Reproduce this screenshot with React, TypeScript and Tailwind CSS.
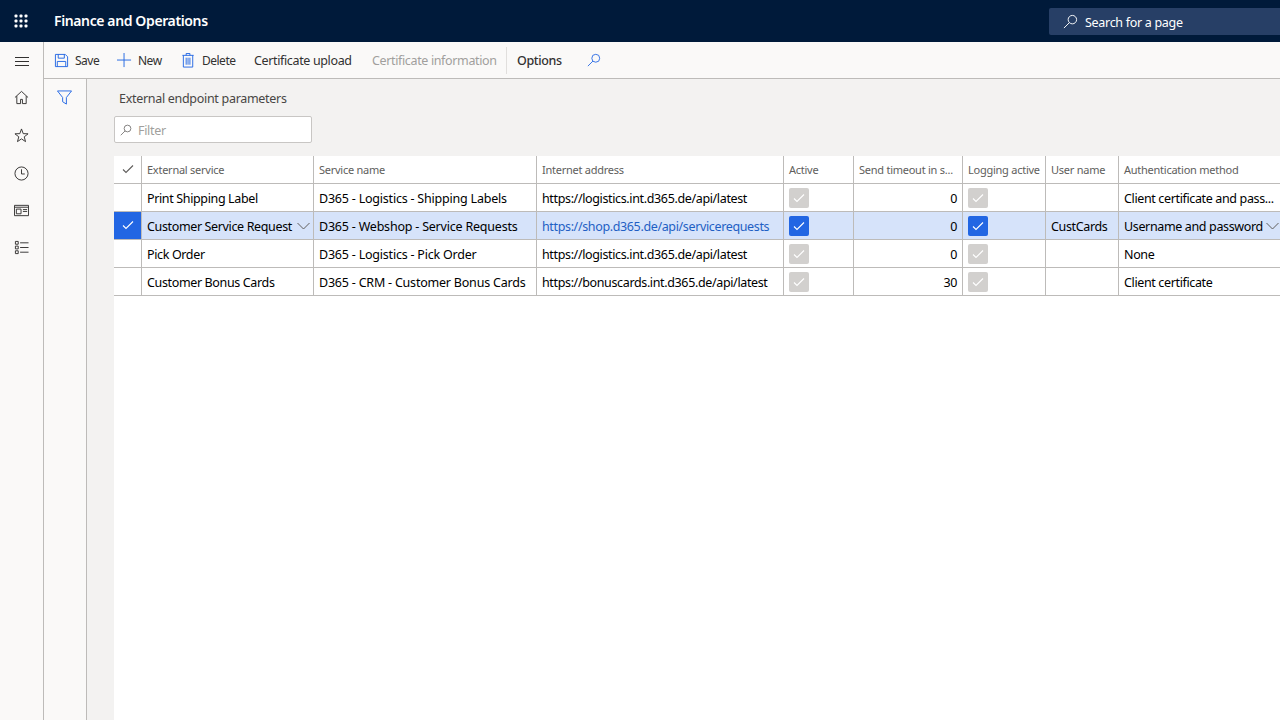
import type { ReactNode } from 'react'

const font = "font-['Noto_Sans','Open_Sans',sans-serif]"

// Thin fluent style icons
function Icon({ size = 16, className, children }: { size?: number; className?: string; children: ReactNode }) {
  return (
    <svg width={size} height={size} viewBox="0 0 16 16" fill="none" stroke="currentColor" strokeWidth="1" className={className}>
      {children}
    </svg>
  )
}

const Waffle = () => (
  <svg width="14" height="14" viewBox="0 0 14 14" fill="white">
    {[0, 5, 10].map((y) => [0, 5, 10].map((x) => <rect key={`${x}-${y}`} x={x + 0.5} y={y + 0.5} width="3" height="3" rx="1" />))}
  </svg>
)

const SearchGlass = ({ className, size = 16 }: { className?: string; size?: number }) => (
  <Icon size={size} className={className}>
    <circle cx="10" cy="6" r="4.5" />
    <path d="M6.8 9.2 1 15" />
  </Icon>
)

const Check = ({ className }: { className?: string }) => (
  <svg width="12" height="10" viewBox="0 0 12 10" fill="none" stroke="currentColor" strokeWidth="1.1" className={className}>
    <path d="M1 5.5 4 8.5 11 1.5" />
  </svg>
)

const Chevron = () => (
  <svg width="13" height="8" viewBox="0 0 13 8" fill="none" stroke="#605e5c" strokeWidth="1" className="shrink-0">
    <path d="M.5 1 6.5 7 12.5 1" />
  </svg>
)

function ToolButton({ icon, label, className }: { icon?: ReactNode; label: string; className?: string }) {
  return (
    <div className={`flex items-center gap-[6px] ${className ?? ''}`}>
      {icon}
      <span className="pt-[2px] text-[12px] tracking-[-0.5px]">{label}</span>
    </div>
  )
}

function Toolbar() {
  return (
    <div className="h-[37px] shrink-0 flex items-center pl-[10px] bg-[#faf9f8] border-b border-[#bdbbb9] text-[12.5px] tracking-[-0.36px] text-[#323130]">
      <ToolButton
        className="w-[63px]"
        label="Save"
        icon={
          <Icon size={15} className="text-[#2266e3]">
            <path d="M1.5 1.5h10.5l2.5 2.5v10.5h-13z" />
            <path d="M4.5 1.5v4h6.5v-4M3.5 14.5v-5.5h9v5.5" />
          </Icon>
        }
      />
      <ToolButton
        className="w-[64px]"
        label="New"
        icon={
          <Icon size={15} className="text-[#2266e3]">
            <path d="M7.5 0v15M0 7.5h15" />
          </Icon>
        }
      />
      <ToolButton
        className="w-[73px]"
        label="Delete"
        icon={
          <Icon size={15} className="text-[#2266e3]">
            <path d="M1.5 2.5h12M5.5 2.5v-2h4v2M2.5 2.5v12.5h10v-12.5M5.5 5v7.5M7.5 5v7.5M9.5 5v7.5" />
          </Icon>
        }
      />
      <span className="w-[118px] pt-[2px]">Certificate upload</span>
      <span className="w-[134px] pt-[2px] text-[#a19f9d]">Certificate information</span>
      <div className="w-px h-[27px] bg-[#e1dfdd] mr-[10px]" />
      <span className="w-[70px] pt-[2px] font-medium">Options</span>
      <SearchGlass size={14} className="text-[#2266e3]" />
    </div>
  )
}

function NavRail() {
  return (
    <div className="w-[44px] shrink-0 bg-[#faf9f8] border-r border-[#bdbbb9] flex flex-col items-center text-[#323130]">
      <div className="h-[36px] pt-[3px] flex items-center">
        <svg width="14" height="10" viewBox="0 0 14 10" stroke="currentColor" strokeWidth="1">
          <path d="M0 .5h14M0 4.5h14M0 8.5h14" />
        </svg>
      </div>
      <div className="flex flex-col items-center">
        <div className="h-[38px] flex items-center">
          <Icon size={15}>
            <path d="M1 8 8 1.5 15 8M3 6.5v8h4v-4.5h2v4.5h4v-8" />
          </Icon>
        </div>
        <div className="h-[38px] flex items-center">
          <Icon size={15}>
            <path d="M8 1 9.8 6l5.2.2-4.1 3.2 1.4 5.1L8 11.6l-4.3 2.9 1.4-5.1L1 6.2 6.2 6z" />
          </Icon>
        </div>
        <div className="h-[38px] flex items-center">
          <Icon size={15}>
            <circle cx="8" cy="8" r="7" />
            <path d="M8 3.5V8.5h3.5" />
          </Icon>
        </div>
        <div className="h-[36px] flex items-center">
          <Icon size={15}>
            <path d="M.5 2.5h15v11H.5zM.5 4.5h15" />
            <path d="M2.5 6.5h5v5h-5zM9.5 7h4.5M9.5 9h4.5" />
          </Icon>
        </div>
        <div className="h-[38px] flex items-center">
          <Icon size={15}>
            <path d="M1.5 1.5h3v3h-3zM1.5 6.5h3v3h-3zM1.5 11.5h3v3h-3zM6.5 3h9M6.5 8h9M6.5 13h9" />
          </Icon>
        </div>
      </div>
    </div>
  )
}

const cols = 'grid grid-cols-[28px_172px_223px_247px_70px_109px_83px_73px_170px]'

const rows = [
  { ext: 'Print Shipping Label', svc: 'D365 - Logistics - Shipping Labels', url: 'https://logistics.int.d365.de/api/latest', timeout: 0, user: '', auth: 'Client certificate and pass...' },
  { ext: 'Customer Service Request', svc: 'D365 - Webshop - Service Requests', url: 'https://shop.d365.de/api/servicerequests', timeout: 0, user: 'CustCards', auth: 'Username and password', selected: true },
  { ext: 'Pick Order', svc: 'D365 - Logistics - Pick Order', url: 'https://logistics.int.d365.de/api/latest', timeout: 0, user: '', auth: 'None' },
  { ext: 'Customer Bonus Cards', svc: 'D365 - CRM - Customer Bonus Cards', url: 'https://bonuscards.int.d365.de/api/latest', timeout: 30, user: '', auth: 'Client certificate' },
]

const headers = ['External service', 'Service name', 'Internet address', 'Active', 'Send timeout in s...', 'Logging active', 'User name', 'Authentication method']

const cell = 'h-[27px] flex items-center px-[5px] border-r border-[#bdbbb9] whitespace-nowrap overflow-hidden'

function CheckBox({ on }: { on?: boolean }) {
  return (
    <div className={`w-5 h-5 rounded-[2px] flex items-center justify-center text-white ${on ? 'bg-[#2266e3]' : 'bg-[#d2d0ce]'}`}>
      <Check />
    </div>
  )
}

function EndpointGrid() {
  return (
    <div className="flex-1 bg-white overflow-hidden text-[12.5px] tracking-[-0.36px] text-black">
      <div className={`${cols} border-b border-[#bdbbb9] text-[11px] tracking-[-0.25px] text-[#605e5c]`}>
        <div className={`${cell} justify-center px-0 pb-[2px]`}>
          <Check className="text-[#605e5c]" />
        </div>
        {headers.map((h) => (
          <div key={h} className={`${cell} pt-[2px]`}>
            {h}
          </div>
        ))}
      </div>
      {rows.map((r) => (
        <div key={r.ext} className={`${cols} border-b border-[#bdbbb9] ${r.selected ? 'bg-[#d6e3fa]' : ''}`}>
          <div className={`${cell} justify-center px-0 pb-[2px] text-white ${r.selected ? 'bg-[#2266e3]' : ''}`}>{r.selected && <Check />}</div>
          <div className={`${cell} justify-between pr-[3px]`}>
            <span className="pt-[4px]">{r.ext}</span>
            {r.selected && <Chevron />}
          </div>
          <div className={`${cell} pt-[4px] tracking-[-0.21px]`}>{r.svc}</div>
          <div className={`${cell} pt-[4px] ${r.selected ? 'text-[#1f5fc4]' : ''}`}>{r.url}</div>
          <div className={cell}>
            <CheckBox on={r.selected} />
          </div>
          <div className={`${cell} pt-[4px] justify-end`}>{r.timeout}</div>
          <div className={cell}>
            <CheckBox on={r.selected} />
          </div>
          <div className={`${cell} pt-[4px]`}>{r.user}</div>
          <div className={`${cell} gap-[3px]`}>
            <span className="pt-[4px]">{r.auth}</span>
            {r.selected && <Chevron />}
          </div>
        </div>
      ))}
    </div>
  )
}

export default function App() {
  return (
    <div className={`w-[1280px] h-[720px] overflow-hidden flex flex-col bg-[#f3f2f1] ${font}`}>
      <header className="h-[42px] shrink-0 bg-[#001a3a] flex items-center text-white">
        <div className="w-[42px] flex justify-center">
          <Waffle />
        </div>
        <div className="ml-[12px] pb-[2px] text-[14px] font-semibold tracking-[-0.38px]">Finance and Operations</div>
        <div className="ml-auto w-[231px] h-[27px] bg-[#273f66] rounded-l-[2px] flex items-center pl-[14px] gap-[7px] text-[12.5px] tracking-[-0.3px]">
          <SearchGlass size={15} />
          <span className="pt-[4px]">Search for a page</span>
        </div>
      </header>
      <div className="flex-1 flex min-h-0">
        <NavRail />
        <div className="flex-1 flex flex-col min-w-0">
          <Toolbar />
          <div className="flex-1 flex min-h-0">
            <div className="w-[43px] shrink-0 bg-[#faf9f8] border-r border-[#bdbbb9] flex justify-center pt-[11px] pr-px">
              <Icon size={15} className="text-[#2266e3]">
                <path d="M.5 1h15L10 8v7l-4-2.5V8z" />
              </Icon>
            </div>
            <div className="flex-1 min-w-0 pl-[27px] flex flex-col">
              <div className="pl-[5px] pt-[11px] h-[37px] text-[12.5px] tracking-[-0.3px] text-[#484644]">External endpoint parameters</div>
              <div className="w-[198px] h-[27px] bg-white border border-[#c8c6c4] rounded-[2px] flex items-center pl-[5px] gap-[6px] text-[12.5px] tracking-[-0.3px] text-[#a19f9d]">
                <SearchGlass size={12} className="text-[#605e5c]" />
                <span className="pt-[4px]">Filter</span>
              </div>
              <div className="h-[13px] shrink-0" />
              <EndpointGrid />
            </div>
          </div>
        </div>
      </div>
    </div>
  )
}
